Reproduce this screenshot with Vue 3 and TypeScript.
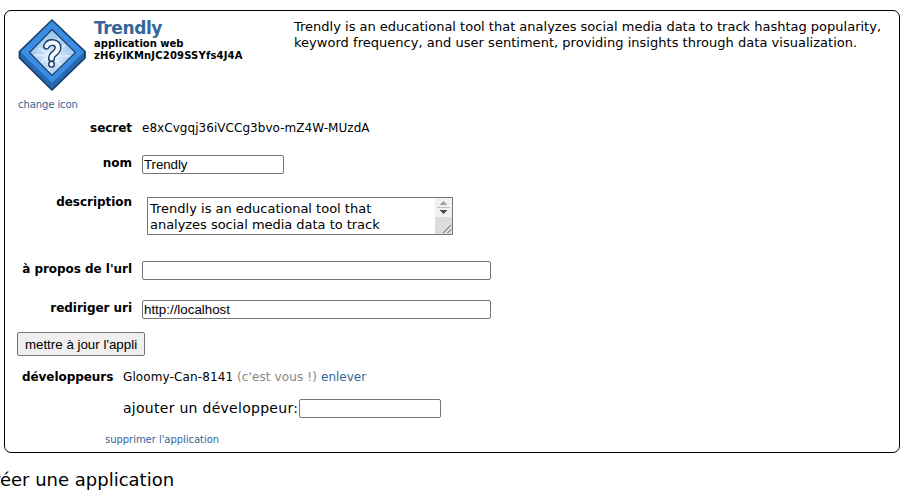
<script setup lang="ts">
import { ref } from 'vue'

const summary = [
  'Trendly is an educational tool that analyzes social media data to track hashtag popularity,',
  'keyword frequency, and user sentiment, providing insights through data visualization.',
]
const name = ref('Trendly')
const aboutUrl = ref('')
const redirectUri = ref('http://localhost')
const newDeveloper = ref('')
</script>

<template>
  <main class="page">
    <section class="app-card">
      <header class="head">
        <div class="icon-col">
          <svg class="icon" width="72" height="74" viewBox="0 0 72 74">
            <defs>
              <radialGradient id="glow" cx="50%" cy="60%" r="50%">
                <stop offset="0" stop-color="#f4faff" />
                <stop offset="0.5" stop-color="#bfdaf5" />
                <stop offset="1" stop-color="#9fc6ed" />
              </radialGradient>
            </defs>
            <path d="M34 2 67 33.500v6.500L34 72 1.500 40v-6.500Z" fill="#2868b2" stroke="#173d66" stroke-width="1.7" stroke-linejoin="round" />
            <path d="M34 3 66 34 34 65 2.500 34Z" fill="#3b8ce3" />
            <path d="M34 11.500 57.500 34.500 34 57.500 11.500 34.500Z" fill="url(#glow)" stroke="#173d66" stroke-width="1.1" />
            <path d="M34 38 25 25M34 38 20 30M34 38 16 37M34 38 23 44M34 38 31 53M34 38 43 47M34 38 52 38M34 38 47 27M34 38 41 20" stroke="#e8f3fd" stroke-width="1.8" opacity=".7" />
            <path d="M28.500 28C31 23 40.500 23.500 40 30C39.500 35.500 33.300 35.500 33.500 40.500M33.500 46v.3" fill="none" stroke="#173d66" stroke-width="7" stroke-linecap="round" stroke-linejoin="round" />
            <path d="M28.500 28C31 23 40.500 23.500 40 30C39.500 35.500 33.300 35.500 33.500 40.500M33.500 46v.3" fill="none" stroke="#f2f8ff" stroke-width="4.200" stroke-linecap="round" stroke-linejoin="round" />
          </svg>
          <a class="change">change icon</a>
        </div>
        <div class="ident">
          <h2>Trendly</h2>
          <b class="kind">application web</b>
          <b class="client">zH6ylKMnJC209SSYfs4J4A</b>
        </div>
        <p class="summary"><span v-for="line in summary" :key="line">{{ line }}</span></p>
      </header>

      <div class="row secret">
        <label>secret</label><span class="secret-value">e8xCvgqj36iVCCg3bvo-mZ4W-MUzdA</span>
      </div>
      <div class="row nom"><label>nom</label><input v-model="name" class="short" /></div>
      <div class="row desc">
        <label>description</label>
        <div class="area">
          <div class="area-text"><span>Trendly is an educational tool that</span><span class="second">analyzes social media data to track</span></div>
          <svg width="17" height="36" viewBox="0 0 17 36" shape-rendering="crispEdges">
            <path d="M0 0h17v19H0Z" fill="#f1f1f1" /><path d="M0 19h17v17H0Z" fill="#dcdcdc" />
            <path d="M2 9.500h13" stroke="#c1c1c1" />
            <path d="m8.500 3 4 4h-8Z" fill="#a3a3a3" /><path d="m4.500 12h8l-4 4Z" fill="#505050" />
            <path d="m8 35 8-8M12.500 35l3.500-3.500" stroke="#555" stroke-width=".9" shape-rendering="auto" />
          </svg>
        </div>
      </div>
      <div class="row url"><label>à propos de l'url</label><input v-model="aboutUrl" class="long" /></div>
      <div class="row uri"><label>rediriger uri</label><input v-model="redirectUri" class="long" /></div>
      <button class="save" type="button"><span>mettre à jour l'appli</span></button>
      <div class="devs">
        <b>développeurs</b><span class="dev-name">Gloomy-Can-8141</span><span class="you">(c'est vous !)</span><a class="remove">enlever</a>
      </div>
      <div class="add"><label>ajouter un développeur:</label><input v-model="newDeveloper" class="short" /></div>
      <a class="delete">supprimer l'application</a>
    </section>
    <h1 class="create">créer une application</h1>
  </main>
</template>

<style>
body { background: #fff; overflow: hidden; }
</style>

<style scoped>
.page { box-sizing: border-box; height: 490px; padding: 10px 9px 0 4px; overflow: hidden; color: #000; font-family: Verdana, "DejaVu Sans", sans-serif; white-space: nowrap; }
.app-card { box-sizing: border-box; width: 896px; height: 443px; border: 1px solid #000; border-radius: 7px; display: flex; flex-direction: column; align-items: flex-start; }
a { color: #336699; text-decoration: none; }
.head { display: flex; height: 106px; width: 100%; }
.icon-col { width: 89px; flex: none; padding: 7px 0 0 13px; box-sizing: border-box; }
.icon { display: block; }
.change { display: block; font-size: 10px; line-height: 14px; margin-top: 6px; letter-spacing: -.08px; }
.ident { width: 200px; flex: none; padding-top: 7px; }
h2 { margin: 0; font-size: 17px; line-height: 20px; letter-spacing: -.4px; color: #336699; }
.kind, .client { display: block; font-size: 10px; line-height: 12px; }
.client { letter-spacing: .18px; }
.summary { margin: 8px 0 0; font-size: 13px; line-height: 16px; }
.summary span { display: block; width: max-content; }
.summary span:last-child { letter-spacing: .025px; }
.row { display: flex; align-items: flex-start; font-size: 12px; line-height: 16px; }
label { font-weight: bold; }
.row label { width: 127px; text-align: right; margin-right: 10px; flex: none; letter-spacing: -.04px; }
.secret { margin-top: 3px; height: 35px; }
.secret-value { letter-spacing: .05px; }
.nom { height: 39px; }
.desc { height: 67px; }
.url { height: 39px; }
.uri { height: 33px; }
input { box-sizing: border-box; height: 19px; margin: 0; padding: 0 1px; border: 1px solid #767676; border-radius: 2px; background: #fff; color: #000; font: 13.33px "Liberation Sans", Arial, sans-serif; letter-spacing: -.08px; }
.short { width: 142px; }
.long { width: 349px; letter-spacing: 0; }
.area { box-sizing: border-box; width: 306px; height: 38px; border: 1px solid #767676; margin: 3px 0 0 5px; display: flex; justify-content: space-between; font-size: 13px; }
.area-text { padding: 3px 0 0 2px; line-height: 16px; }
.area-text span { display: block; width: max-content; }
.area-text .second { letter-spacing: -.03px; }
.save { box-sizing: border-box; width: 128px; height: 24px; margin: -1px 0 0 12px; padding: 0; border: 1px solid #767676; border-radius: 2px; background: #efefef; color: #000; font: 13.33px "Liberation Sans", Arial, sans-serif; }
.devs { display: flex; font-size: 12px; line-height: 16px; margin: 13px 0 0 17px; }
.devs b { width: 101px; letter-spacing: -.06px; }
.dev-name { width: 114px; letter-spacing: .12px; }
.you { width: 84px; color: #888; letter-spacing: .12px; }
.add { display: flex; margin: 14px 0 0 118px; font-size: 14px; line-height: 18px; }
.add label { font-weight: normal; width: 176px; letter-spacing: .28px; }
.delete { font-size: 10px; line-height: 14px; margin: 15px 0 0 100px; letter-spacing: -.04px; }
.create { margin: 16px 0 0 -21px; font-size: 18px; line-height: 22px; font-weight: normal; }
</style>
